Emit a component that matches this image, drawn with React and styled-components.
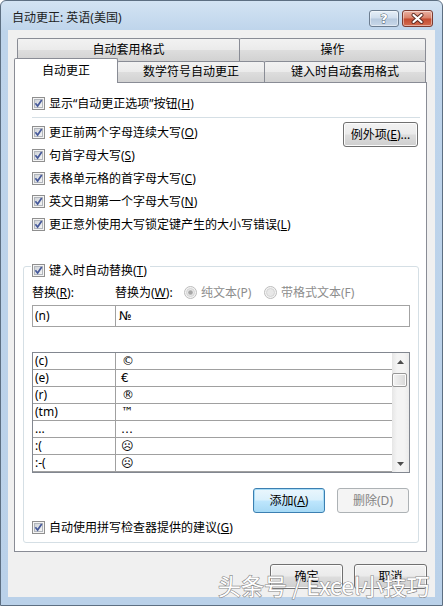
import React from "react";
import styled, { createGlobalStyle } from "styled-components";

const GlobalStyle = createGlobalStyle`
  html, body { margin: 0; padding: 0; background: #ffffff; }
  body {
    font-family: "Noto Sans", "Noto Sans CJK SC", "DejaVu Sans", sans-serif;
    font-size: 12px;
    color: #000;
  }
  *, *::before, *::after { box-sizing: border-box; }
  u { text-decoration: underline; text-underline-offset: 1px; }
`;

const Window = styled.div`
  position: relative;
  width: 443px;
  height: 606px;
  border: 1px solid #5d6f82;
  border-radius: 6px 6px 0 0;
  background: linear-gradient(#d3e3f3 0px, #bed4eb 30px, #bad1e9 100%);
  display: flex;
  flex-direction: column;
  overflow: hidden;
`;

const TitleBar = styled.div`
  height: 29px;
  flex-shrink: 0;
  display: flex;
  align-items: flex-start;
  padding: 0 9px 0 11px;
`;

const Title = styled.div`
  margin-top: 9px;
  line-height: 16px;
  color: #1e1e1e;
`;

const CaptionButtons = styled.div`
  margin-left: auto;
  margin-top: 9px;
  display: flex;
  gap: 3px;
`;

const CaptionButton = styled.div`
  width: ${(p) => p.$w}px;
  height: 17px;
  border-radius: 3px;
  display: flex;
  align-items: center;
  justify-content: center;
  border: 1px solid ${(p) => (p.$close ? "#7b3b31" : "#6c7d90")};
  background: ${(p) =>
    p.$close
      ? "linear-gradient(#eab1a3, #d98068 48%, #c34a2f 52%, #d46d4f)"
      : "linear-gradient(#e6eff8, #cfdded 48%, #b6c9de 52%, #c9d8e9)"};
  box-shadow: inset 0 0 0 1px rgba(255, 255, 255, 0.45);
`;

const HelpGlyph = styled.span`
  font-family: "DejaVu Sans", sans-serif;
  font-weight: bold;
  font-size: 13px;
  line-height: 13px;
  color: #ffffff;
  -webkit-text-stroke: 0.8px #3e4d5e;
  paint-order: stroke fill;
`;

const Client = styled.div`
  margin: 0 7px;
  height: 567px;
  flex-shrink: 0;
  background: #f0f0f0;
  padding: 8px 8px 0 6px;
  display: flex;
  flex-direction: column;
`;

const TabControl = styled.div`
  width: 413px;
  display: flex;
  flex-direction: column;
`;

const TabRow = styled.div`
  display: flex;
  height: ${(p) => p.$h}px;
  padding-left: ${(p) => p.$pad}px;
`;

const Tab = styled.div`
  width: ${(p) => p.$w}px;
  height: ${(p) => (p.$selected ? "25px" : "100%")};
  margin-top: ${(p) => (p.$selected ? "-3px" : "0")};
  margin-left: ${(p) => (p.$selected ? "-2px" : "0")};
  margin-right: -1px;
  position: relative;
  z-index: ${(p) => (p.$selected ? 2 : 0)};
  border: 1px solid #898c95;
  border-bottom: none;
  border-radius: 2px 2px 0 0;
  background: ${(p) =>
    p.$selected
      ? "#ffffff"
      : "linear-gradient(#f2f2f2, #ebebeb 48%, #dddddd 52%, #d2d2d2)"};
  display: flex;
  align-items: center;
  justify-content: center;
  line-height: 16px;
`;

const Panel = styled.div`
  height: 470px;
  border: 1px solid #898c95;
  background: #ffffff;
  display: flex;
  flex-direction: column;
`;

const CheckRow = styled.div`
  display: flex;
  align-items: center;
  gap: 4px;
  height: ${(p) => p.$h || 23}px;
  line-height: 16px;
  white-space: nowrap;
`;

const TopOption = styled(CheckRow)`
  margin-top: 9px;
  padding-left: 17px;
`;

const Separator = styled.div`
  height: 1px;
  background: #d5dfe5;
  margin: 2px 6px 0 17px;
`;

const OptionsBlock = styled.div`
  display: flex;
  justify-content: space-between;
  align-items: flex-start;
  margin-top: 3px;
  padding: 0 8px 0 17px;
`;

const OptionsColumn = styled.div`
  display: flex;
  flex-direction: column;
`;

const Button = styled.div`
  width: ${(p) => p.$w}px;
  height: ${(p) => p.$h || 25}px;
  margin-top: ${(p) => p.$mt || 0}px;
  border-radius: 3px;
  display: flex;
  align-items: center;
  justify-content: center;
  line-height: 16px;
  border: 1px solid
    ${(p) =>
      p.$variant === "default"
        ? "#3c7fb1"
        : p.$variant === "disabled"
        ? "#adb2b5"
        : "#707070"};
  color: ${(p) => (p.$variant === "disabled" ? "#838383" : "#000")};
  background: ${(p) =>
    p.$variant === "disabled"
      ? "#f4f4f4"
      : p.$variant === "default"
      ? "linear-gradient(#eaf6fd, #d9f0fc 48%, #bee6fd 52%, #a7d9f5)"
      : "linear-gradient(#f2f2f2, #ebebeb 48%, #dddddd 52%, #cfcfcf)"};
  box-shadow: ${(p) =>
    p.$variant === "disabled"
      ? "none"
      : p.$variant === "default"
      ? "inset 0 0 0 1px #a6dcf7"
      : "inset 0 0 0 1px #fcfcfc"};
`;

const GroupBox = styled.fieldset`
  margin: 18px 7px 0 8px;
  padding: 0 8px 6px 8px;
  border: 1px solid #d5dfe5;
  border-radius: 3px;
  min-width: 0;
`;

const Legend = styled.legend`
  padding: 8px 3px 0 1px;
  margin-left: -1px;
`;

const LabelsRow = styled.div`
  display: flex;
  align-items: center;
  height: 17px;
  margin-top: 5px;
  line-height: 16px;
  white-space: nowrap;
`;

const FieldLabel = styled.div`
  width: ${(p) => p.$w}px;
  flex-shrink: 0;
`;

const RadioOption = styled.div`
  width: ${(p) => p.$w}px;
  display: flex;
  align-items: center;
  gap: 4px;
  color: #8d8d8d;
`;

const InputRow = styled.div`
  display: flex;
  height: 22px;
  margin-top: 4px;
  border: 1px solid #a3a3a3;
  background: #ffffff;
  line-height: 20px;
`;

const KeyCell = styled.div`
  width: 83px;
  flex-shrink: 0;
  border-right: 1px solid #a0a0a0;
  padding-left: 2px;
`;

const ValueCell = styled.div`
  flex: 1;
  padding-left: ${(p) => p.$pad || 5}px;
  font-family: "DejaVu Sans", "Noto Sans", sans-serif;
  font-size: 12px;
`;

const ListBox = styled.div`
  display: flex;
  height: 121px;
  margin-top: 25px;
  border: 1px solid #828790;
  background: #ffffff;
`;

const ListRows = styled.div`
  flex: 1;
  display: flex;
  flex-direction: column;
`;

const ListRow = styled.div`
  display: flex;
  height: 17px;
  flex-shrink: 0;
  border-bottom: 1px solid #a0a0a0;
  line-height: 16px;
`;

const ScrollBar = styled.div`
  width: 17px;
  display: flex;
  flex-direction: column;
  background: linear-gradient(90deg, #e6e6e6, #f4f4f4 30%, #f4f4f4 70%, #ebebeb);
`;

const ScrollArrow = styled.div`
  height: 17px;
  display: flex;
  align-items: center;
  justify-content: center;
`;

const ScrollThumb = styled.div`
  width: 15px;
  height: 14px;
  margin-top: 3px;
  border: 1px solid #979797;
  border-radius: 2px;
  background: linear-gradient(90deg, #f3f3f3, #e6e6e6 50%, #d7d7d7);
  box-shadow: inset 0 0 0 1px #fbfbfb;
`;

const Spacer = styled.div`
  flex: 1;
`;

const ButtonsRow = styled.div`
  display: flex;
  justify-content: flex-end;
  gap: 12px;
  margin-top: 15px;
  padding-right: 1px;
`;

const SpellRow = styled(CheckRow)`
  margin-top: 6px;
`;

const DialogButtons = styled.div`
  display: flex;
  justify-content: flex-end;
  gap: 11px;
  margin-top: 12px;
`;

const Watermark = styled.div`
  position: absolute;
  left: 217px;
  top: 570px;
  font-family: "Noto Sans CJK SC", "Noto Sans", sans-serif;
  font-size: 23px;
  line-height: 28px;
  color: #ffffff;
  -webkit-text-stroke: 1.2px #8a8a8a;
  paint-order: stroke fill;
  white-space: nowrap;
  pointer-events: none;
`;

const CheckBox = () => (
  <svg width="13" height="13" viewBox="0 0 13 13" style={{ flexShrink: 0 }}>
    <defs>
      <linearGradient id="cbFill" x1="0" y1="0" x2="1" y2="1">
        <stop offset="0" stopColor="#cdd1d6" />
        <stop offset="1" stopColor="#f7f7f7" />
      </linearGradient>
    </defs>
    <rect x="0.5" y="0.5" width="12" height="12" fill="#f4f4f4" stroke="#8f8f8f" />
    <rect x="2.5" y="2.5" width="8" height="8" fill="url(#cbFill)" stroke="#b2b6bc" />
    <path d="M3.4 6.3 L5.6 9 L9.7 3.1" fill="none" stroke="#46599a" strokeWidth="1.7" />
  </svg>
);

const Radio = ({ checked }) => (
  <svg width="13" height="13" viewBox="0 0 13 13" style={{ flexShrink: 0 }}>
    <circle cx="6.5" cy="6.5" r="6" fill="#f4f4f4" stroke="#bcbcbc" />
    <circle cx="6.5" cy="6.5" r="4" fill="#e8e8e8" stroke="#d4d4d4" />
    {checked && <circle cx="6.5" cy="6.5" r="2.3" fill="#a7a7a7" />}
  </svg>
);

const CloseIcon = () => (
  <svg width="13" height="11" viewBox="0 0 13 11">
    <path d="M2.5 2 L10.5 9 M10.5 2 L2.5 9" stroke="#5b2a22" strokeWidth="4" strokeLinecap="round" />
    <path d="M2.5 2 L10.5 9 M10.5 2 L2.5 9" stroke="#ffffff" strokeWidth="2.2" strokeLinecap="round" />
  </svg>
);

const Arrow = ({ up }) => (
  <svg width="7" height="4" viewBox="0 0 7 4">
    <path d={up ? "M0 4 L3.5 0 L7 4 Z" : "M0 0 L7 0 L3.5 4 Z"} fill="#4d4d4d" />
  </svg>
);

const entries = [
  ["(c)", "©", 6],
  ["(e)", "€", 5],
  ["(r)", "®", 6],
  ["(tm)", "™", 5],
  ["...", "…", 5],
  [":(", "☹", 5],
  [":-(", "☹", 5],
];

const options = [
  <>更正前两个字母连续大写(<u>O</u>)</>,
  <>句首字母大写(<u>S</u>)</>,
  <>表格单元格的首字母大写(<u>C</u>)</>,
  <>英文日期第一个字母大写(<u>N</u>)</>,
  <>更正意外使用大写锁定键产生的大小写错误(<u>L</u>)</>,
];

export default function App() {
  return (
    <>
      <GlobalStyle />
      <Window>
        <TitleBar>
          <Title>自动更正: 英语(美国)</Title>
          <CaptionButtons>
            <CaptionButton $w={30}>
              <HelpGlyph>?</HelpGlyph>
            </CaptionButton>
            <CaptionButton $w={31} $close>
              <CloseIcon />
            </CaptionButton>
          </CaptionButtons>
        </TitleBar>
        <Client>
          <TabControl>
            <TabRow $h={23} $pad={3}>
              <Tab $w={223}>自动套用格式</Tab>
              <Tab $w={187}>操作</Tab>
            </TabRow>
            <TabRow $h={21} $pad={2}>
              <Tab $w={104} $selected>自动更正</Tab>
              <Tab $w={148}>数学符号自动更正</Tab>
              <Tab $w={162}>键入时自动套用格式</Tab>
            </TabRow>
            <Panel>
              <TopOption>
                <CheckBox />
                <span>显示“自动更正选项”按钮(<u>H</u>)</span>
              </TopOption>
              <Separator />
              <OptionsBlock>
                <OptionsColumn>
                  {options.map((text, i) => (
                    <CheckRow key={i}>
                      <CheckBox />
                      <span>{text}</span>
                    </CheckRow>
                  ))}
                </OptionsColumn>
                <Button $w={75} $mt={1}>
                  例外项(<u>E</u>)...
                </Button>
              </OptionsBlock>
              <GroupBox>
                <Legend>
                  <CheckRow $h={17}>
                    <CheckBox />
                    <span>键入时自动替换(<u>T</u>)</span>
                  </CheckRow>
                </Legend>
                <LabelsRow>
                  <FieldLabel $w={83}>替换(<u>R</u>):</FieldLabel>
                  <FieldLabel $w={69}>替换为(<u>W</u>):</FieldLabel>
                  <RadioOption $w={80}>
                    <Radio checked />
                    <span>纯文本(P)</span>
                  </RadioOption>
                  <RadioOption $w={110}>
                    <Radio />
                    <span>带格式文本(F)</span>
                  </RadioOption>
                </LabelsRow>
                <InputRow>
                  <KeyCell>(n)</KeyCell>
                  <ValueCell $pad={3}>№</ValueCell>
                </InputRow>
                <ListBox>
                  <ListRows>
                    {entries.map(([k, v, pad]) => (
                      <ListRow key={k}>
                        <KeyCell>{k}</KeyCell>
                        <ValueCell $pad={pad}>{v}</ValueCell>
                      </ListRow>
                    ))}
                  </ListRows>
                  <ScrollBar>
                    <ScrollArrow>
                      <Arrow up />
                    </ScrollArrow>
                    <ScrollThumb />
                    <Spacer />
                    <ScrollArrow>
                      <Arrow />
                    </ScrollArrow>
                  </ScrollBar>
                </ListBox>
                <ButtonsRow>
                  <Button $w={72} $variant="default">
                    添加(<u>A</u>)
                  </Button>
                  <Button $w={72} $variant="disabled">
                    删除(D)
                  </Button>
                </ButtonsRow>
                <SpellRow $h={17}>
                  <CheckBox />
                  <span>自动使用拼写检查器提供的建议(<u>G</u>)</span>
                </SpellRow>
              </GroupBox>
            </Panel>
          </TabControl>
          <DialogButtons>
            <Button $w={73}>确定</Button>
            <Button $w={73}>取消</Button>
          </DialogButtons>
        </Client>
        <Watermark>头条号 / Excel小技巧</Watermark>
      </Window>
    </>
  );
}
